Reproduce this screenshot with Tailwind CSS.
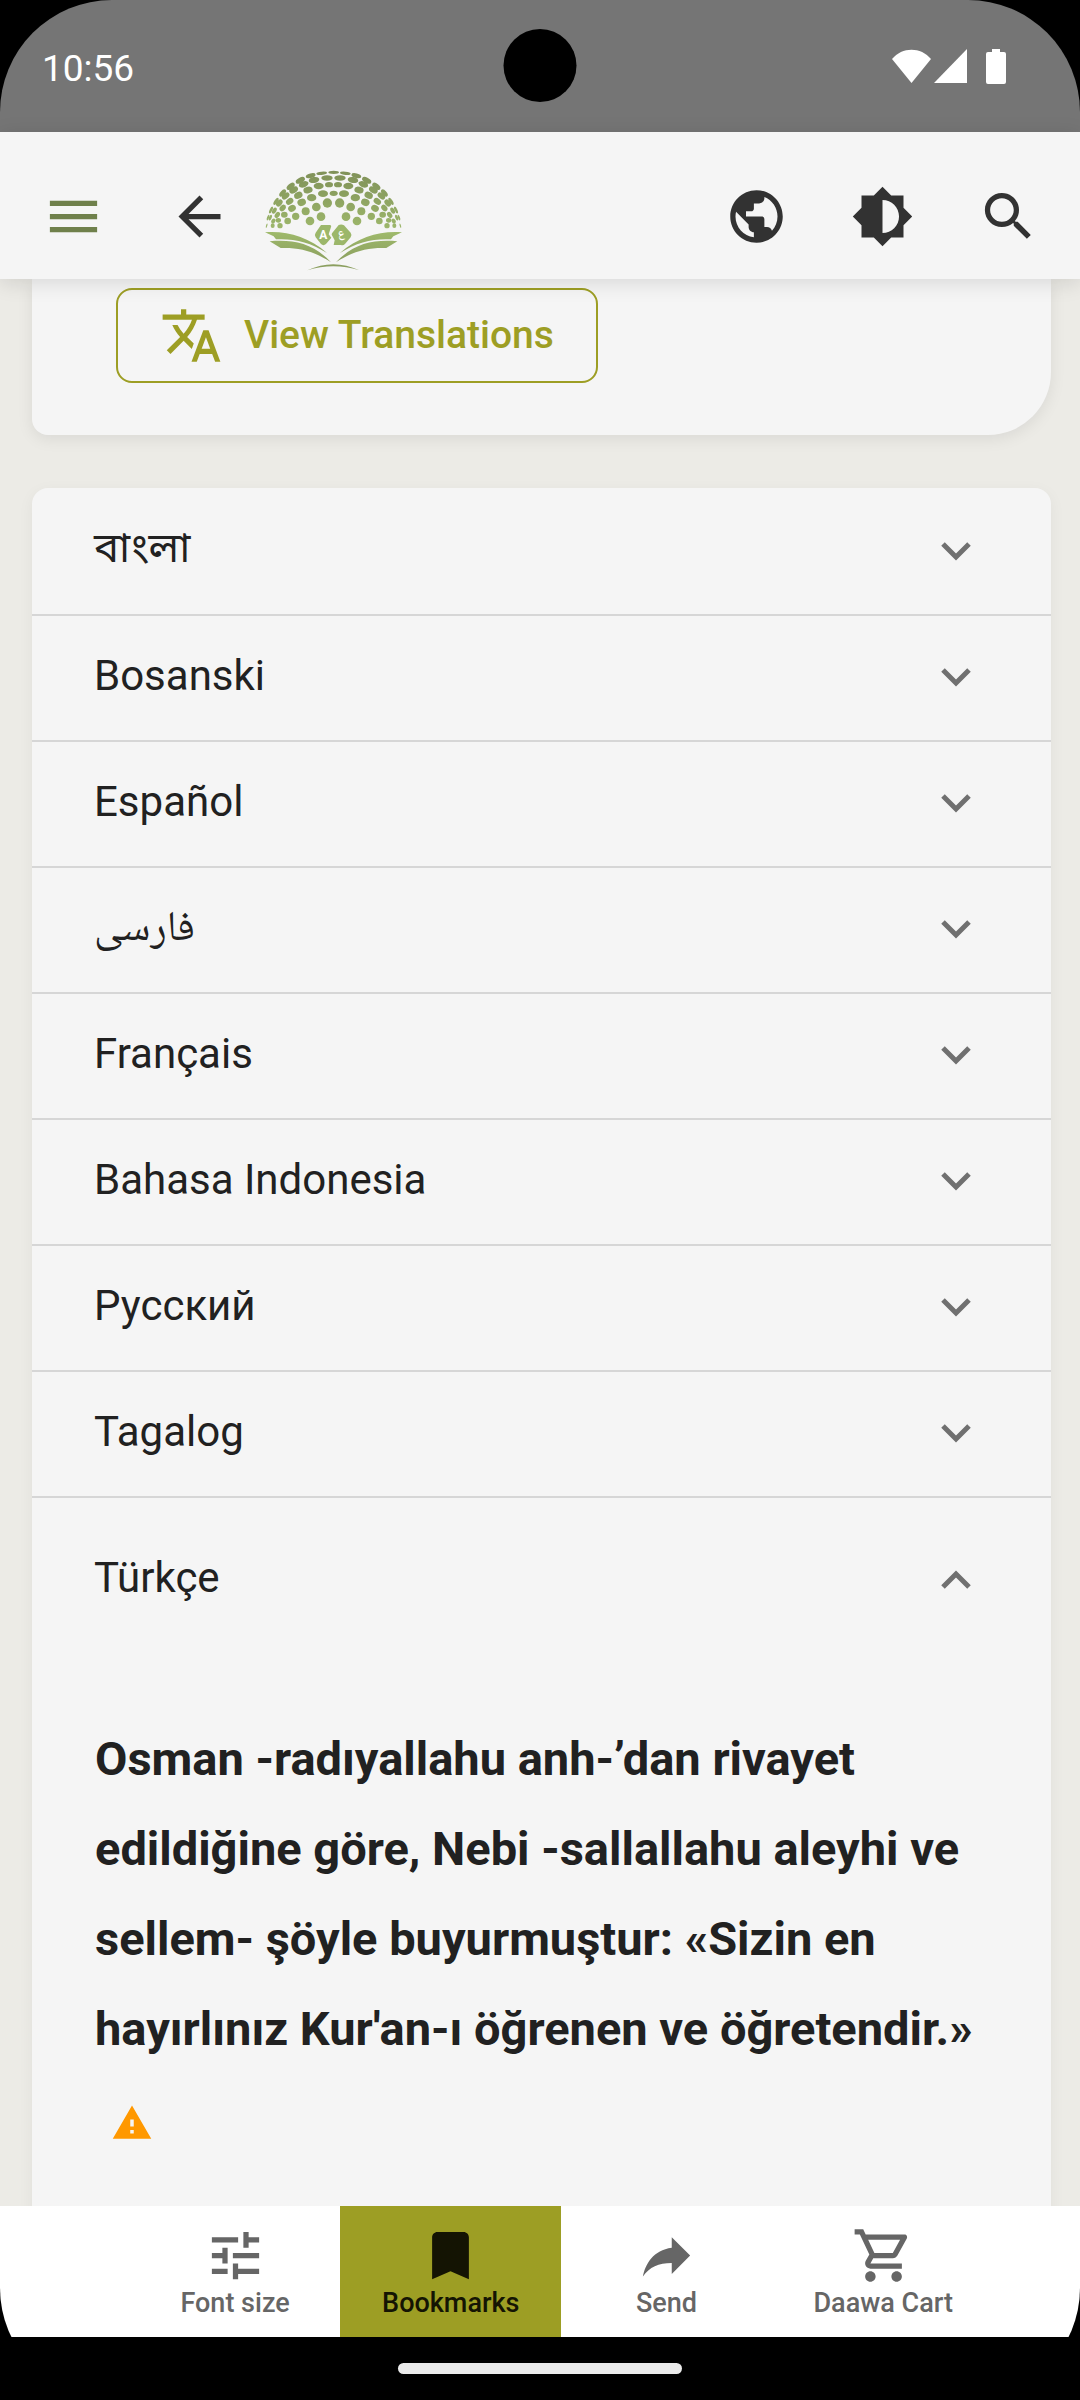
<!DOCTYPE html>
<html lang="en">
<head>
    <meta charset="UTF-8">
    <meta name="viewport" content="width=device-width, initial-scale=1.0">
    <title>View Translations</title>
    <script src="https://cdn.jsdelivr.net/npm/@tailwindcss/browser@4"></script>
</head>
<body class="bg-black font-['Roboto','Noto_Sans',sans-serif] text-[#212121]">
    <div class="flex h-screen flex-col overflow-hidden rounded-[112px]">
        <!-- === Status bar === -->
        <div class="relative flex h-[132px] shrink-0 items-center justify-between bg-[#757575] pr-[72px] pl-[42px] text-white">
            <span class="pt-1 text-[37px] leading-none">10:56</span>
            <div class="absolute top-[29px] left-1/2 size-[73px] -translate-x-1/2 rounded-full bg-black"></div>
            <svg class="h-[36px] w-[116px]" viewBox="0 0 116 36" fill="currentColor" aria-hidden="true">
                <path d="M0 11C10-1.500 29-1.500 39 11L19.500 35z"/>
                <path d="M42 35h33V1z"/>
                <path d="M100 1h8v3h4a2 2 0 0 1 2 2v28a2 2 0 0 1-2 2h-16a2 2 0 0 1-2-2V6a2 2 0 0 1 2-2h4z"/>
            </svg>
        </div>
        <!-- === Toolbar === -->
        <header class="relative z-10 flex h-[147px] shrink-0 items-center bg-[#f5f5f5] pt-[21px] pr-10 pl-[42px] text-[#323232] shadow-[0_4px_20px_rgba(0,0,0,0.12)]">
            <button type="button" aria-label="Menu" class="text-[#6f804b]">
                <svg class="size-[63px]" viewBox="0 0 24 24" fill="currentColor"><path d="M3 18h18v-2H3v2zm0-5h18v-2H3v2zm0-7v2h18V6H3z"/></svg>
            </button>
            <button type="button" aria-label="Back" class="ml-[63px]">
                <svg class="size-[63px]" viewBox="0 0 24 24" fill="currentColor"><path d="M20 11H7.830l5.590-5.590L12 4l-8 8 8 8 1.410-1.410L7.830 13H20v-2z"/></svg>
            </button>
            <a href="#" aria-label="Home" class="mt-2.5 ml-[34px]">
                <svg class="h-[102px] w-[137px]" viewBox="45 30 411 306">
                    <defs>
                        <linearGradient id="dome" gradientUnits="userSpaceOnUse" x1="0" y1="30" x2="0" y2="205">
                            <stop offset="0" stop-color="#7f9058"/>
                            <stop offset="1" stop-color="#9db76b"/>
                        </linearGradient>
                        <linearGradient id="page" gradientUnits="userSpaceOnUse" x1="0" y1="215" x2="0" y2="306">
                            <stop offset="0" stop-color="#9fba6b"/>
                            <stop offset="1" stop-color="#8b9f5f"/>
                        </linearGradient>
                        <g id="half">
                            <g fill="url(#dome)">
                                <ellipse cx="215" cy="40" rx="16" ry="5" transform="rotate(-5 215 40)"/>
                                <ellipse cx="182" cy="47" rx="15" ry="7" transform="rotate(-14 182 47)"/>
                                <ellipse cx="151" cy="61" rx="15" ry="8" transform="rotate(-28 151 61)"/>
                                <ellipse cx="122" cy="79" rx="14" ry="8" transform="rotate(-38 122 79)"/>
                                <ellipse cx="98" cy="99" rx="13" ry="7" transform="rotate(-48 98 99)"/>
                                <ellipse cx="78" cy="124" rx="12" ry="5" transform="rotate(-57 78 124)"/>
                                <ellipse cx="63" cy="150" rx="11" ry="4" transform="rotate(-65 63 150)"/>
                                <ellipse cx="54" cy="173" rx="9" ry="3" transform="rotate(-70 54 173)"/>
                                <ellipse cx="231" cy="54" rx="17" ry="8"/>
                                <ellipse cx="192" cy="60" rx="16" ry="9" transform="rotate(-10 192 60)"/>
                                <ellipse cx="161" cy="73" rx="15" ry="9" transform="rotate(-20 161 73)"/>
                                <ellipse cx="131" cy="90" rx="14" ry="9" transform="rotate(-28 131 90)"/>
                                <ellipse cx="107" cy="108" rx="13" ry="8" transform="rotate(-40 107 108)"/>
                                <ellipse cx="88" cy="129" rx="12" ry="8" transform="rotate(-50 88 129)"/>
                                <ellipse cx="73" cy="152" rx="10" ry="6" transform="rotate(-60 73 152)"/>
                                <ellipse cx="61" cy="173" rx="9" ry="4" transform="rotate(-65 61 173)"/>
                                <ellipse cx="50" cy="197" rx="7" ry="2" transform="rotate(-75 50 197)"/>
                                <ellipse cx="237" cy="74" rx="12" ry="8"/>
                                <ellipse cx="206" cy="78" rx="15" ry="10"/>
                                <ellipse cx="174" cy="90" rx="14" ry="10" transform="rotate(-12 174 90)"/>
                                <ellipse cx="145" cy="106" rx="13" ry="10" transform="rotate(-25 145 106)"/>
                                <ellipse cx="119" cy="124" rx="12" ry="9" transform="rotate(-35 119 124)"/>
                                <ellipse cx="98" cy="144" rx="11" ry="8" transform="rotate(-50 98 144)"/>
                                <ellipse cx="82" cy="165" rx="10" ry="7" transform="rotate(-55 82 165)"/>
                                <ellipse cx="70" cy="183" rx="8" ry="6" transform="rotate(-60 70 183)"/>
                                <ellipse cx="219" cy="101" rx="15" ry="10"/>
                                <ellipse cx="185" cy="113" rx="14" ry="11"/>
                                <ellipse cx="155" cy="127" rx="13" ry="11" transform="rotate(-20 155 127)"/>
                                <ellipse cx="126" cy="145" rx="12" ry="10" transform="rotate(-30 126 145)"/>
                                <ellipse cx="103" cy="164" rx="10" ry="9"/>
                                <ellipse cx="85" cy="181" rx="8" ry="7"/>
                                <ellipse cx="68" cy="197" rx="6" ry="7"/>
                                <circle cx="232" cy="129" r="14"/>
                                <circle cx="199" cy="141" r="13"/>
                                <circle cx="167" cy="154" r="12"/>
                                <circle cx="137" cy="169" r="11"/>
                                <circle cx="113" cy="183" r="10"/>
                                <circle cx="90" cy="197" r="8"/>
                                <circle cx="213" cy="170" r="13"/>
                                <circle cx="180" cy="183" r="13"/>
                            </g>
                            <path fill="url(#page)" d="M45 217C110 212 175 230 231 279 180 246 130 235 78 238L71 229z"/>
                            <path fill="url(#page)" d="M59 244C130 238 190 250 243 307 190 272 145 262 92 264z"/>
                        </g>
                    </defs>
                    <use href="#half"/>
                    <use href="#half" transform="translate(501 0) scale(-1 1)"/>
                    <g fill="url(#dome)">
                        <ellipse cx="251" cy="37" rx="16" ry="5"/>
                        <ellipse cx="251" cy="100" rx="12" ry="8"/>
                    </g>
                    <g fill="#9cb76a">
                        <path d="M213 195h26a4 4 0 0 1 4 6l-7 22 8 10-16 19q-8 7-15 0l-16-20q-5-7 0-14z"/>
                        <path d="M266 195q8-4 16 1l20 22q5 7 0 14l-17 20q-5 5-12 3h-22l3-14-9-17q0-5 4-8z"/>
                    </g>
                    <text x="220" y="236" text-anchor="middle" fill="#fff" class="font-['Roboto',sans-serif] text-[36px] font-bold">A</text>
                    <text x="274" y="232" text-anchor="middle" fill="#fff" class="font-['Noto_Naskh_Arabic','DejaVu_Sans',sans-serif] text-[36px] font-bold">ع</text>
                    <path fill="#8b9f5f" d="M172 331Q250 294 328 331 250 307 172 331z"/>
                </svg>
            </a>
            <div class="ml-auto flex gap-[63px]">
                <button type="button" aria-label="Language">
                    <svg class="size-[63px]" viewBox="0 0 24 24" fill="currentColor"><path d="M12 2C6.480 2 2 6.480 2 12s4.480 10 10 10 10-4.480 10-10S17.520 2 12 2zm-1 17.930c-3.950-.490-7-3.850-7-7.930 0-.620.080-1.210.210-1.790L9 15v1c0 1.100.900 2 2 2v1.930zm6.900-2.540c-.260-.810-1-1.390-1.900-1.390h-1v-3c0-.550-.450-1-1-1H8v-2h2c.550 0 1-.450 1-1V7h2c1.100 0 2-.900 2-2v-.410c2.930 1.190 5 4.060 5 7.410 0 2.080-.800 3.970-2.100 5.390z"/></svg>
                </button>
                <button type="button" aria-label="Dark mode">
                    <svg class="size-[63px]" viewBox="0 0 24 24" fill="currentColor"><path d="M20 15.310L23.310 12 20 8.690V4h-4.690L12 .690 8.690 4H4v4.690L.690 12 4 15.310V20h4.690L12 23.310 15.310 20H20v-4.690zM12 18.300V5.700c3.480 0 6.300 2.820 6.300 6.300s-2.820 6.300-6.300 6.300z"/></svg>
                </button>
                <button type="button" aria-label="Search">
                    <svg class="size-[63px]" viewBox="0 0 24 24" fill="currentColor"><path d="M15.500 14h-.790l-.280-.270C15.410 12.590 16 11.110 16 9.500 16 5.910 13.090 3 9.500 3S3 5.910 3 9.500 5.910 16 9.500 16c1.610 0 3.090-.590 4.230-1.570l.270.280v.790l5 4.990L20.490 19l-4.990-5zm-6 0C7.010 14 5 11.990 5 9.500S7.010 5 9.500 5 14 7.010 14 9.500 11.990 14 9.500 14z"/></svg>
                </button>
            </div>
        </header>
        <!-- === Content === -->
        <main class="min-h-0 flex-1 overflow-hidden bg-[#ecebe6] pr-[29px] pl-8">
            <section class="rounded-br-[63px] rounded-bl-2xl bg-[#f5f5f5] px-[84px] pt-[9px] pb-[52px] shadow-[0_4px_16px_rgba(0,0,0,0.08)]">
                <button type="button" class="flex h-[95px] items-center gap-[21px] rounded-2xl border-2 border-[#9d9e24] px-[42px] text-[39px] font-medium text-[#9d9e24]">
                    <svg class="size-[63px]" viewBox="0 0 24 24" fill="currentColor" aria-hidden="true"><path d="M12.870 15.070l-2.540-2.510.030-.030c1.740-1.940 2.980-4.170 3.710-6.530H17V4h-7V2H8v2H1v1.990h11.170C11.500 7.920 10.440 9.750 9 11.350 8.070 10.320 7.300 9.190 6.690 8h-2c.730 1.630 1.730 3.170 2.980 4.560l-5.090 5.020L4 19l5-5 3.110 3.110.760-2.040zM18.500 10h-2L12 22h2l1.120-3h4.750L21 22h2l-4.500-12zm-2.620 7l1.620-4.330L19.120 17h-3.240z"/></svg>
                    View Translations
                </button>
            </section>
            <section class="mt-[53px] rounded-t-2xl bg-[#f5f5f5] text-[42px] shadow-[0_4px_16px_rgba(0,0,0,0.05)]">
                <button type="button" aria-expanded="false" class="flex h-[126px] w-full items-center justify-between pr-20 pl-[62px]">
                    <span lang="bn" class="font-['Noto_Sans_Bengali','Noto_Sans',sans-serif]">বাংলা</span>
                    <svg class="h-[19px] w-[30px]" viewBox="0 0 30 19" fill="none" stroke="#707070" stroke-width="5"><path d="M2 2l13 13L28 2"/></svg>
                </button>
                <button type="button" aria-expanded="false" class="flex h-[126px] w-full items-center justify-between border-t-2 border-[#d6d6d6] pr-20 pb-0.5 pl-[62px]">
                    <span lang="bs" class="pb-1">Bosanski</span>
                    <svg class="h-[19px] w-[30px]" viewBox="0 0 30 19" fill="none" stroke="#707070" stroke-width="5"><path d="M2 2l13 13L28 2"/></svg>
                </button>
                <button type="button" aria-expanded="false" class="flex h-[126px] w-full items-center justify-between border-t-2 border-[#d6d6d6] pr-20 pb-0.5 pl-[62px]">
                    <span lang="es" class="pb-1">Español</span>
                    <svg class="h-[19px] w-[30px]" viewBox="0 0 30 19" fill="none" stroke="#707070" stroke-width="5"><path d="M2 2l13 13L28 2"/></svg>
                </button>
                <button type="button" aria-expanded="false" class="flex h-[126px] w-full items-center justify-between border-t-2 border-[#d6d6d6] pr-20 pb-0.5 pl-[62px]">
                    <span lang="fa" class="pt-1 font-['Noto_Naskh_Arabic','Noto_Sans_Arabic',sans-serif]">فارسی</span>
                    <svg class="h-[19px] w-[30px]" viewBox="0 0 30 19" fill="none" stroke="#707070" stroke-width="5"><path d="M2 2l13 13L28 2"/></svg>
                </button>
                <button type="button" aria-expanded="false" class="flex h-[126px] w-full items-center justify-between border-t-2 border-[#d6d6d6] pr-20 pb-0.5 pl-[62px]">
                    <span lang="fr" class="pb-1">Français</span>
                    <svg class="h-[19px] w-[30px]" viewBox="0 0 30 19" fill="none" stroke="#707070" stroke-width="5"><path d="M2 2l13 13L28 2"/></svg>
                </button>
                <button type="button" aria-expanded="false" class="flex h-[126px] w-full items-center justify-between border-t-2 border-[#d6d6d6] pr-20 pb-0.5 pl-[62px]">
                    <span lang="id" class="pb-1">Bahasa Indonesia</span>
                    <svg class="h-[19px] w-[30px]" viewBox="0 0 30 19" fill="none" stroke="#707070" stroke-width="5"><path d="M2 2l13 13L28 2"/></svg>
                </button>
                <button type="button" aria-expanded="false" class="flex h-[126px] w-full items-center justify-between border-t-2 border-[#d6d6d6] pr-20 pb-0.5 pl-[62px]">
                    <span lang="ru" class="pb-1">Русский</span>
                    <svg class="h-[19px] w-[30px]" viewBox="0 0 30 19" fill="none" stroke="#707070" stroke-width="5"><path d="M2 2l13 13L28 2"/></svg>
                </button>
                <button type="button" aria-expanded="false" class="flex h-[126px] w-full items-center justify-between border-t-2 border-[#d6d6d6] pr-20 pb-0.5 pl-[62px]">
                    <span lang="tl" class="pb-1">Tagalog</span>
                    <svg class="h-[19px] w-[30px]" viewBox="0 0 30 19" fill="none" stroke="#707070" stroke-width="5"><path d="M2 2l13 13L28 2"/></svg>
                </button>
                <button type="button" aria-expanded="true" aria-controls="panel-tr" class="flex h-[166px] w-full items-center justify-between border-t-2 border-[#d6d6d6] pr-20 pb-0.5 pl-[62px]">
                    <span lang="tr" class="pb-1">Türkçe</span>
                    <svg class="h-[19px] w-[30px]" viewBox="0 0 30 19" fill="none" stroke="#707070" stroke-width="5"><path d="M2 17L15 4l13 13"/></svg>
                </button>
                <!-- Expanded translation -->
                <div id="panel-tr" class="px-[63px] pt-[52px] pb-[84px]">
                    <p lang="tr" class="text-[47px] leading-[90px] font-bold">
                        Osman -radıyallahu anh-’dan rivayet edildiğine göre, Nebi -sallallahu aleyhi ve sellem- şöyle buyurmuştur: «Sizin en hayırlınız Kur'an-ı öğrenen ve öğretendir.»
                        <button type="button" aria-label="Report a problem" class="ml-4 align-middle text-[#ff9800]">
                            <svg class="size-[42px]" viewBox="0 0 24 24" fill="currentColor"><path d="M1 21h22L12 2 1 21zm12-3h-2v-2h2v2zm0-4h-2v-4h2v4z"/></svg>
                        </button>
                    </p>
                </div>
            </section>
        </main>
        <!-- === Bottom navigation === -->
        <nav class="flex h-[131px] shrink-0 justify-center bg-white pl-[45px] text-[27px] font-medium text-[#666]">
            <button type="button" class="flex min-w-[210px] flex-col items-center px-[42px] pt-[18px]">
                <svg class="size-[63px]" viewBox="0 0 24 24" fill="currentColor" aria-hidden="true"><path d="M3 17v2h6v-2H3zM3 5v2h10V5H3zm10 16v-2h8v-2h-8v-2h-2v6h2zM7 9v2H3v2h4v2h2V9H7zm14 4v-2H11v2h10zm-6-4h2V7h4V5h-4V3h-2v6z"/></svg>
                <span class="leading-[32px]">Font size</span>
            </button>
            <button type="button" class="flex min-w-[210px] flex-col items-center bg-[#9d9e24] px-[42px] pt-[18px] text-[#141403]">
                <svg class="size-[63px]" viewBox="0 0 24 24" fill="currentColor" aria-hidden="true"><path d="M17 3H7c-1.100 0-2 .900-2 2v16l7-3 7 3V5c0-1.100-.900-2-2-2z"/></svg>
                <span class="leading-[32px]">Bookmarks</span>
            </button>
            <button type="button" class="flex min-w-[210px] flex-col items-center px-[42px] pt-[18px]">
                <svg class="size-[63px]" viewBox="0 0 24 24" fill="currentColor" aria-hidden="true"><path d="M14 9V5l7 7-7 7v-4.100c-5 0-8.500 1.600-11 5.100 1-5 4-10 11-11z"/></svg>
                <span class="leading-[32px]">Send</span>
            </button>
            <button type="button" class="flex min-w-[210px] flex-col items-center px-[42px] pt-[18px]">
                <svg class="size-[63px]" viewBox="0 0 24 24" fill="currentColor" aria-hidden="true"><path d="M15.550 13c.750 0 1.410-.410 1.750-1.030l3.580-6.490c.370-.660-.110-1.480-.870-1.480H5.210l-.940-2H1v2h2l3.600 7.590-1.350 2.440C4.520 15.370 5.480 17 7 17h12v-2H7l1.100-2h7.450zM6.160 6h12.150l-2.760 5H8.530L6.160 6zM7 18c-1.100 0-1.990.900-1.990 2S5.900 22 7 22s2-.900 2-2-.900-2-2-2zm10 0c-1.100 0-1.990.900-1.990 2s.890 2 1.990 2 2-.900 2-2-.900-2-2-2z"/></svg>
                <span class="leading-[32px]">Daawa Cart</span>
            </button>
        </nav>
        <!-- Gesture bar -->
        <div class="flex h-[63px] shrink-0 items-center justify-center bg-black">
            <div class="h-[11px] w-[284px] rounded-full bg-[#ebebeb]"></div>
        </div>
    </div>
</body>
</html>
